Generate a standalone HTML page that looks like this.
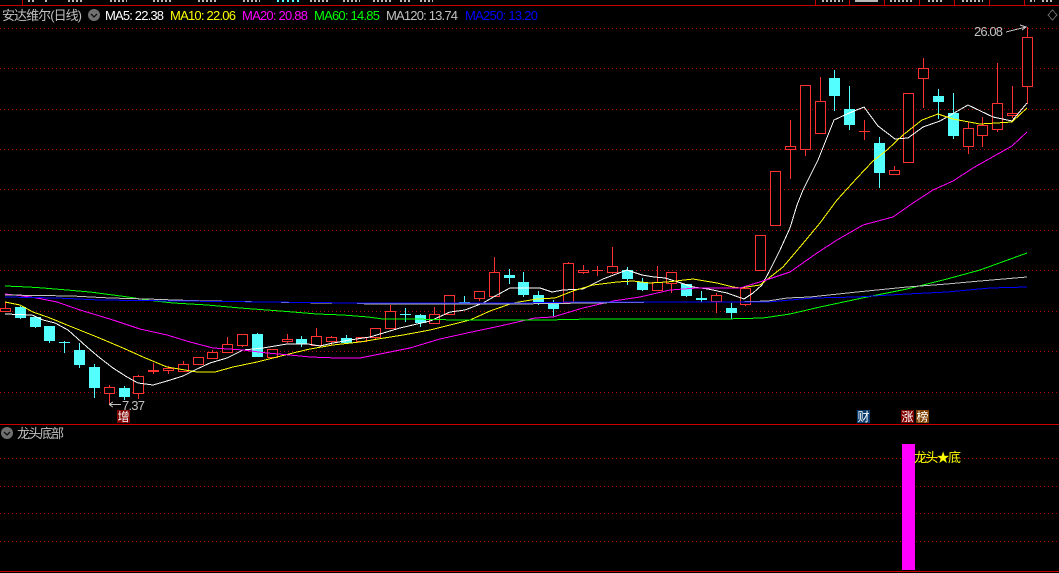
<!DOCTYPE html>
<html><head><meta charset="utf-8"><style>
html,body{margin:0;padding:0;background:#000;width:1059px;height:573px;overflow:hidden}
svg{display:block}
text{font-family:"Liberation Sans","Noto Sans CJK SC","WenQuanYi Zen Hei",sans-serif}
</style></head><body>
<svg width="1059" height="573" viewBox="0 0 1059 573" xmlns="http://www.w3.org/2000/svg">
<rect width="1059" height="573" fill="#000"/>
<g shape-rendering="crispEdges">
<path d="M0 28.5H1059M0 68.5H1059M0 109.5H1059M0 149.5H1059M0 189.5H1059M0 230.5H1059M0 270.5H1059M0 311.5H1059M0 351.5H1059M0 392.5H1059M0 458.5H1059M0 486.5H1059M0 513.5H1059M0 541.5H1059" stroke="#b00000" stroke-width="1" stroke-dasharray="1 3" fill="none"/>
<path d="M0 5.5H1059M0 424.5H1059M0 571.5H1059M22.5 0V5M815.5 0V5M849.5 0V5M884.5 0V5M919.5 0V5M954.5 0V5M989.5 0V5M1024.5 0V5" stroke="#c80000" stroke-width="1" fill="none"/>
<path d="M28 1H35M45 1H48M68 1H82M110 1H127M153 1H173M198 1H217M243 1H260M310 1H330M343 1H360M373 1H393M400 1H410M420 1H433M822 1H843M890 1H913M928 1H943M962 1H983M1030 1H1035M1042 1H1052" stroke="#b8b8b8" stroke-width="2" stroke-dasharray="2 2" fill="none"/>
<path d="M855 1H878" stroke="#b8b8b8" stroke-width="2" fill="none"/>
<path d="M277 1H300" stroke="#54ffff" stroke-width="2" stroke-dasharray="2 3" fill="none"/>

<path stroke="#ff3232" fill="none" d="M5.5 302V311M109.5 385V405M138.5 375V399M153.5 363V374M168.5 366V374M183.5 361V372M212.5 350V359M227.5 337V353M242.5 334V347M287.5 334V343M316.5 328V346M331.5 336V345M375.5 328V339M390.5 305V329M434.5 307V323M479.5 291V301M494.5 257V297M568.5 262V303M583.5 265V274M597.5 266V276M612.5 247V274M657.5 266V291M671.5 272V293M716.5 293V313M745.5 288V306M790.5 120V179M805.5 85V156M820.5 77V134M864.5 120V140M894.5 166V175M923.5 58V108M968.5 122V154M982.5 117V147M997.5 63V132M1012.5 86V118M1027.5 27V104"/>
<path stroke="#54ffff" fill="none" d="M20.5 306V319M35.5 317V328M49.5 326V343M64.5 341V353M79.5 343V368M94.5 364V398M124.5 386V400M257.5 333V357M301.5 336V347M346.5 335V344M405.5 308V322M420.5 314V327M464.5 296V303M509.5 269V284M523.5 272V297M538.5 291V305M553.5 300V316M627.5 267V285M642.5 278V291M686.5 284V297M701.5 291V302M731.5 303V319M834.5 70V111M849.5 86V130M879.5 137V188M938.5 89V119M953.5 93V139"/>
<path stroke="#54ffff" fill="none" d="M59 342.5H70M400 314.5H411M459 302.5H470"/>
<path stroke="#ff3232" fill="none" d="M148 370.5H159M148 371.5H159M592 270.5H603M859 131.5H870"/>

<g fill="#54ffff">
<rect x="15" y="307" width="11" height="11"/><rect x="30" y="317" width="11" height="10"/><rect x="44" y="326" width="11" height="15"/><rect x="74" y="350" width="11" height="15"/><rect x="89" y="367" width="11" height="21"/><rect x="119" y="388" width="11" height="9"/><rect x="252" y="334" width="11" height="23"/><rect x="296" y="339" width="11" height="5"/><rect x="341" y="338" width="11" height="5"/><rect x="415" y="315" width="11" height="8"/><rect x="504" y="275" width="11" height="3"/><rect x="518" y="282" width="11" height="13"/><rect x="533" y="295" width="11" height="7"/><rect x="548" y="302" width="11" height="7"/><rect x="622" y="270" width="11" height="9"/><rect x="637" y="282" width="11" height="8"/><rect x="681" y="284" width="11" height="12"/><rect x="696" y="298" width="11" height="2"/><rect x="726" y="308" width="11" height="5"/><rect x="829" y="78" width="11" height="18"/><rect x="844" y="109" width="11" height="16"/><rect x="874" y="143" width="11" height="30"/><rect x="933" y="96" width="11" height="6"/><rect x="948" y="113" width="11" height="23"/>
</g>
<g fill="#000" stroke="#ff3232">
<rect x="0.5" y="308.5" width="10" height="3"/><rect x="104.5" y="387.5" width="10" height="6"/><rect x="133.5" y="376.5" width="10" height="17"/><rect x="163.5" y="368.5" width="10" height="2"/><rect x="178.5" y="364.5" width="10" height="7"/><rect x="193.5" y="357.5" width="10" height="7"/><rect x="207.5" y="352.5" width="10" height="6"/><rect x="222.5" y="344.5" width="10" height="8"/><rect x="237.5" y="334.5" width="10" height="11"/><rect x="267.5" y="349.5" width="10" height="8"/><rect x="282.5" y="339.5" width="10" height="2"/><rect x="311.5" y="336.5" width="10" height="9"/><rect x="326.5" y="337.5" width="10" height="4"/><rect x="356.5" y="337.5" width="10" height="4"/><rect x="370.5" y="328.5" width="10" height="9"/><rect x="385.5" y="311.5" width="10" height="17"/><rect x="429.5" y="314.5" width="10" height="9"/><rect x="444.5" y="295.5" width="10" height="19"/><rect x="474.5" y="291.5" width="10" height="7"/><rect x="489.5" y="272.5" width="10" height="24"/><rect x="563.5" y="263.5" width="10" height="39"/><rect x="578.5" y="270.5" width="10" height="2"/><rect x="607.5" y="266.5" width="10" height="6"/><rect x="652.5" y="282.5" width="10" height="8"/><rect x="666.5" y="272.5" width="10" height="11"/><rect x="711.5" y="295.5" width="10" height="6"/><rect x="740.5" y="288.5" width="10" height="16"/><rect x="755.5" y="235.5" width="10" height="35"/><rect x="770.5" y="171.5" width="10" height="54"/><rect x="785.5" y="146.5" width="10" height="3"/><rect x="800.5" y="85.5" width="10" height="64"/><rect x="815.5" y="101.5" width="10" height="32"/><rect x="889.5" y="170.5" width="10" height="4"/><rect x="903.5" y="93.5" width="10" height="69"/><rect x="918.5" y="68.5" width="10" height="10"/><rect x="963.5" y="128.5" width="10" height="18"/><rect x="977.5" y="125.5" width="10" height="10"/><rect x="992.5" y="103.5" width="10" height="26"/><rect x="1007.5" y="113.5" width="10" height="2"/><rect x="1022.5" y="37.5" width="10" height="49"/>
</g>

<g fill="none" stroke-width="1">
<polyline stroke="#ffffff" points="5,314 32,315 43,320 55,323 68,330 87,347 100,358 113,368 127,377 138,383 153,385 167,381 183,376 197,369 210,363 227,358 243,350 263,348 287,344 308,344 320,346 333,343 350,340 370,337 400,328 430,321 450,312 465,310 483,303 497,295 510,288 540,288 552,292 563,290 583,289 603,279 627,270 642,275 654,277 665,278 678,282 693,287 708,289 727,293 744,299 753,293 762,285 770,270 780,250 790,228 797,205 803,190 818,160 834,120 847,114 864,107 878,126 895,139 908,138 923,127 940,121 968,105 993,117 1012,121 1027,103"/>
<polyline stroke="#ffff00" points="5,302 20,305 33,312 50,318 67,325 97,337 123,348 143,357 167,367 197,372 215,372 233,367 257,362 277,357 293,353 310,349 333,345 360,342 378,339 403,335 430,330 450,325 470,320 490,311 513,303 537,299 555,298 573,291 593,285 617,282 633,281 650,283 667,282 693,279 717,283 733,287 740,288 760,285 783,267 800,247 820,223 837,200 857,178 873,161 887,150 903,135 922,120 938,114 953,119 980,124 1012,122 1027,108"/>
<polyline stroke="#ff00ff" points="5,294 23,296 37,298 57,302 80,310 113,320 140,329 167,335 190,342 213,348 243,350 267,353 290,355 310,357 337,358 360,358 380,354 410,348 440,339 467,333 500,326 535,318 553,317 583,308 613,301 640,297 670,290 697,288 740,288 763,281 790,272 817,253 837,240 863,225 893,217 913,203 933,190 953,181 973,168 1012,146 1027,132"/>
<polyline stroke="#00ff00" points="5,286 28,287 43,288 67,290 90,292 113,295 128,297 147,300 173,303 207,305 240,308 267,310 293,312 317,314 343,315 368,317 383,319 413,319 457,320 487,320 517,320 547,320 590,319 723,319 763,318 790,314 820,307 867,297 907,289 947,279 980,270 1027,253"/>
<polyline stroke="#c0c0c0" points="5,295 72,296 110,298 147,299 175,300 207,301 325,303 353,303 368,304 515,304 663,302 737,302 768,301 787,298 810,297 857,292 907,287 947,284 980,281 1027,277"/>
<polyline stroke="#0000ff" points="5,297 57,298 100,300 177,301 267,302 353,303 517,303 577,302 737,302 768,302 813,298 857,297 907,294 947,292 990,288 1027,287"/>
</g>

<rect x="902" y="444" width="13" height="126" fill="#ff00ff"/>
<rect x="117" y="410" width="13" height="13" fill="#800000"/>
<rect x="857" y="410" width="13" height="13" fill="#0a3c6e"/>
<rect x="901" y="410" width="13" height="13" fill="#800000"/>
<rect x="916" y="410" width="13" height="13" fill="#804000"/>
<path d="M1052.5 10L1057 15L1052.5 20L1048 15Z" fill="none" stroke="#666"/>
<path d="M109 404.5H121M109 404.5L113 402M109 404.5L113 407M1006 32L1026 27M1020 25L1026 27L1022 30" stroke="#c0c0c0" fill="none"/>
</g>

<circle cx="94" cy="15" r="6" fill="#707070"/>
<path d="M91 14L94 17L97 14" stroke="#111" stroke-width="1.3" fill="none"/>
<circle cx="7" cy="433" r="6" fill="#707070"/>
<path d="M4 432L7 435L10 432" stroke="#111" stroke-width="1.3" fill="none"/>

<text x="2" y="20" font-size="13" fill="#c0c0c0" textLength="80">安达维尔(日线)</text>
<g font-size="13">
<text x="105" y="20" fill="#ffffff" textLength="59">MA5: 22.38</text>
<text x="170" y="20" fill="#ffff00" textLength="66">MA10: 22.06</text>
<text x="242" y="20" fill="#ff00ff" textLength="66">MA20: 20.88</text>
<text x="314" y="20" fill="#00ff00" textLength="66">MA60: 14.85</text>
<text x="386" y="20" fill="#c0c0c0" textLength="72">MA120: 13.74</text>
<text x="465" y="20" fill="#0000ff" textLength="73">MA250: 13.20</text>
<text x="122" y="410" fill="#c0c0c0" textLength="23">7.37</text>
<text x="974" y="36" fill="#c0c0c0" textLength="29">26.08</text>
<text x="914" y="462" fill="#ffff00" textLength="47">龙头★底</text>
</g>
<text x="17" y="438" font-size="13" fill="#c0c0c0" textLength="47">龙头底部</text>
<g font-size="12" fill="#ffffff" text-anchor="middle">
<text x="123.5" y="421">增</text>
<text x="863.5" y="421">财</text>
<text x="907.5" y="421">涨</text>
<text x="922.5" y="421">榜</text>
</g>
</svg>
</body></html>
